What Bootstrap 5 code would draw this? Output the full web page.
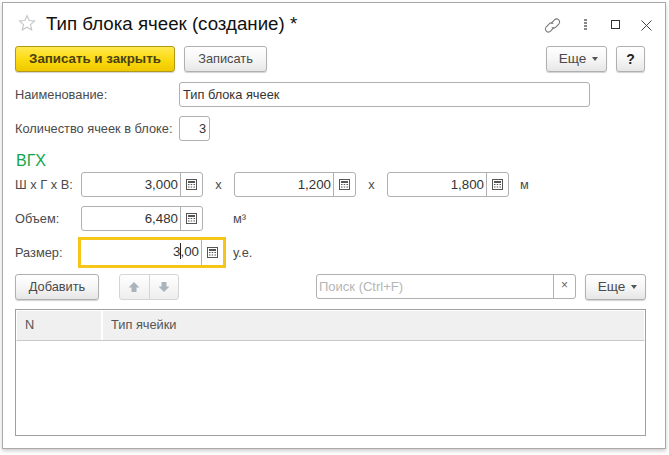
<!DOCTYPE html>
<html lang="ru">
<head>
<meta charset="utf-8">
<title>Тип блока ячеек</title>
<link href="https://cdn.jsdelivr.net/npm/bootstrap@5.3.0/dist/css/bootstrap.min.css" rel="stylesheet">
<style>
html,body{height:100%;background:#fff;overflow:hidden}
body{font-family:"Liberation Sans",Arial,sans-serif;font-size:12.8px;color:#4b4b4b;padding:2px 3px 6px 2px}
.win{width:664px;height:447px;border:1px solid #a9a9a9;box-shadow:0 2px 4px rgba(0,0,0,.2);background:#fff;padding:0 20px 0 12px}
.ttl{height:43px;padding-top:7px}
.ttl svg.star{margin:4px 0 0 3px;flex:none}
.ttl h1{font-size:18.7px;font-weight:400;color:#111;margin:1px 0 0 10px;line-height:26px}
.tools{margin-right:-7px;height:30px}
.tools svg{display:block}
.b1c{height:26px;border:1px solid #b0b0b0;border-radius:3px;background:linear-gradient(#fff,#f6f6f6 50%,#e6e6e6);box-shadow:0 1px 1px rgba(0,0,0,.18);color:#4a4a4a;font-size:12.8px;padding:0;line-height:24px;flex:none}
.b1c:hover{background:#eee;border-color:#b0b0b0;color:#4a4a4a}
.bmain{width:160px;background:linear-gradient(#ffe94d,#fbd90f 55%,#efc800);border-color:#b29a18;color:#4a4010;font-weight:700;font-size:13.3px}
.bsave{width:83px;margin-left:9px}
.bmore{width:61px;font-size:13.6px;padding-left:4px}
.bq{width:29px;margin-left:9px;font-weight:700;color:#222;font-size:14px}
.caret1{display:inline-block;border:3.5px solid transparent;border-top:4px solid #555;border-bottom:0;margin-left:6px;vertical-align:2px}
.line1{height:34px}
.lab{width:164px;flex:none}
.fld{height:25px;border:1px solid #b0b0b0;border-radius:3px;background:#fff;color:#333;line-height:23px;padding:0 3px}
.fname{width:411px}
.fcount{width:31px;text-align:right;padding-right:3px}
.grp{color:#14a44d;font-size:16px;line-height:20px;height:21px;margin:1px 0 0 1px}
.num{width:122px;height:25px;border:1px solid #b0b0b0;border-radius:3px;flex:none;background:#fff}
.val{flex:1;text-align:right;color:#333;font-size:13.3px;line-height:23px;padding-right:2px;border-right:1px solid #b0b0b0}
.calc{width:21px;flex:none}
.lab2{width:66px;flex:none}
.xsep{width:31px;text-align:center;flex:none}
.rowv{height:25px}
.focusf{width:148px;height:31px;border:3px solid #f5c518;border-radius:0;margin-left:-3px;flex:none;background:#fff}
.focusf .val{height:25px;position:relative}
.cur{display:inline-block;width:1px;height:16px;background:#222;vertical-align:-3px;margin:0 -.5px}
.unitv{margin-left:30px}
.unitf{margin-left:7px}
.unitm{margin-left:11px}
.arrows{width:60px;height:26px;margin-left:20px;border:1px solid #d5d5d5;border-radius:3px;background:linear-gradient(#fff,#eee);flex:none}
.arrows span{flex:1;display:flex;align-items:center;justify-content:center}
.arrows span+span{border-left:1px solid #d5d5d5}
.srch{width:260px;height:25px;margin-left:137px;border:1px solid #b0b0b0;border-radius:3px;flex:none}
.srch .ph{flex:1;color:#b5b5b5;line-height:23px;padding-left:2px;border-right:1px solid #b0b0b0;font-size:13px}
.srch .cl{width:21px;text-align:center;line-height:21px;color:#666;font-size:12px}
.tbl1{width:631px;height:127px;border:1px solid #a0a0a0;margin-top:9px}
.thd{height:31px;background:#f0f0f0;border:1px solid #fff;border-bottom:1px solid #c9c9c9;line-height:28px;color:#555}
.thd div:first-child{width:86px;padding-left:8px;border-right:2px solid #fff}
.thd div+div{padding-left:8px}
</style>
</head>
<body>
<div class="win">
  <div class="ttl d-flex align-items-start">
    <svg class="star" width="18" height="18" viewBox="0 0 18 18" aria-hidden="true"><path d="M9 1.500l2.200 5 5.300.5-4 3.600 1.200 5.400L9 13.200 4.300 16l1.200-5.400-4-3.600 5.300-.5z" fill="#fff" stroke="#c4c4c4" stroke-width="1.100"/></svg>
    <h1>Тип блока ячеек (создание) *</h1>
    <div class="tools ms-auto d-flex align-items-center">
      <svg width="17" height="17" viewBox="0 0 18 18" aria-hidden="true"><g fill="none" stroke="#777" stroke-width="1.100"><path d="M7.500 7l3.500-4a3.200 3.200 0 0 1 4.800 4.200l-3.300 3.600a3.100 3.100 0 0 1-4.300.2"/><path d="M10.500 11l-3.500 4a3.200 3.200 0 0 1-4.800-4.200l3.300-3.600a3.100 3.100 0 0 1 4.300-.2"/></g></svg>
      <svg style="margin-left:23px" width="3" height="12" viewBox="0 0 3 12" aria-hidden="true"><g fill="#888"><rect x="0" y="0" width="3" height="2"/><rect x="0" y="3" width="3" height="2"/><rect x="0" y="6" width="3" height="2"/><rect x="0" y="9" width="3" height="2"/></g></svg>
      <svg style="margin-left:24px" width="10" height="10" viewBox="0 0 10 10" aria-hidden="true"><rect x=".5" y=".5" width="8" height="8" fill="none" stroke="#333"/></svg>
      <svg style="margin-left:20px" width="11" height="11" viewBox="0 0 11 11" aria-hidden="true"><path d="M.5.500l10 10M10.500.500l-10 10" stroke="#444" fill="none"/></svg>
    </div>
  </div>

  <div class="d-flex" style="margin-bottom:10px">
    <button class="btn b1c bmain" type="button">Записать и закрыть</button>
    <button class="btn b1c bsave" type="button">Записать</button>
    <button class="btn b1c bmore ms-auto" type="button">Еще<span class="caret1"></span></button>
    <button class="btn b1c bq" type="button">?</button>
  </div>

  <div class="d-flex line1 align-items-start">
    <div class="lab" style="line-height:25px">Наименование:</div>
    <div class="fld fname">Тип блока ячеек</div>
  </div>
  <div class="d-flex line1 align-items-start">
    <div class="lab" style="line-height:25px">Количество ячеек в блоке:</div>
    <div class="fld fcount">3</div>
  </div>
  <div class="grp">ВГХ</div>

  <div class="d-flex rowv align-items-center">
    <div class="lab2">Ш х Г х В:</div>
    <div class="num d-flex"><div class="val">3,000</div><div class="calc d-flex align-items-center justify-content-center"><svg width="11" height="11" viewBox="0 0 11 11"><use href="#calc"/></svg></div></div>
    <div class="xsep">х</div>
    <div class="num d-flex"><div class="val">1,200</div><div class="calc d-flex align-items-center justify-content-center"><svg width="11" height="11" viewBox="0 0 11 11"><use href="#calc"/></svg></div></div>
    <div class="xsep">х</div>
    <div class="num d-flex"><div class="val">1,800</div><div class="calc d-flex align-items-center justify-content-center"><svg width="11" height="11" viewBox="0 0 11 11"><use href="#calc"/></svg></div></div>
    <div class="unitm">м</div>
  </div>

  <div class="d-flex rowv align-items-center" style="margin-top:9px">
    <div class="lab2">Объем:</div>
    <div class="num d-flex"><div class="val">6,480</div><div class="calc d-flex align-items-center justify-content-center"><svg width="11" height="11" viewBox="0 0 11 11"><use href="#calc"/></svg></div></div>
    <div class="unitv">м³</div>
  </div>

  <div class="d-flex align-items-center" style="margin-top:6px;height:31px">
    <div class="lab2">Размер:</div>
    <div class="focusf d-flex"><div class="val">3<span class="cur"></span>,00</div><div class="calc d-flex align-items-center justify-content-center"><svg width="11" height="11" viewBox="0 0 11 11"><use href="#calc"/></svg></div></div>
    <div class="unitf">у.е.</div>
  </div>

  <div class="d-flex align-items-start" style="margin-top:6px">
    <button class="btn b1c" style="width:84px" type="button">Добавить</button>
    <div class="arrows d-flex">
      <span><svg width="12" height="12" viewBox="0 0 12 12"><path d="M6 1l5.500 5.500H8.500V11h-5V6.500H.500z" fill="#a9b4bc"/></svg></span>
      <span><svg width="12" height="12" viewBox="0 0 12 12"><path d="M6 11L.500 5.500h3V1h5v4.500h3z" fill="#a9b4bc"/></svg></span>
    </div>
    <div class="srch d-flex"><div class="ph">Поиск (Ctrl+F)</div><div class="cl">×</div></div>
    <button class="btn b1c bmore" style="margin-left:9px" type="button">Еще<span class="caret1"></span></button>
  </div>

  <div class="tbl1">
    <div class="thd d-flex"><div>N</div><div>Тип ячейки</div></div>
  </div>
</div>
<svg width="0" height="0" class="d-block" aria-hidden="true"><defs><g id="calc"><rect x=".5" y=".5" width="10" height="10" fill="#fff" stroke="#555"/><rect x="2" y="2" width="7" height="2" fill="#555"/><g fill="#555"><rect x="2" y="5" width="1.500" height="1"/><rect x="4.700" y="5" width="1.500" height="1"/><rect x="7.500" y="5" width="1.500" height="1"/><rect x="2" y="7.500" width="1.500" height="1"/><rect x="4.700" y="7.500" width="1.500" height="1"/><rect x="7.500" y="7.500" width="1.500" height="1"/></g></g></defs></svg>
<script src="https://cdn.jsdelivr.net/npm/bootstrap@5.3.0/dist/js/bootstrap.bundle.min.js"></script>
</body>
</html>
